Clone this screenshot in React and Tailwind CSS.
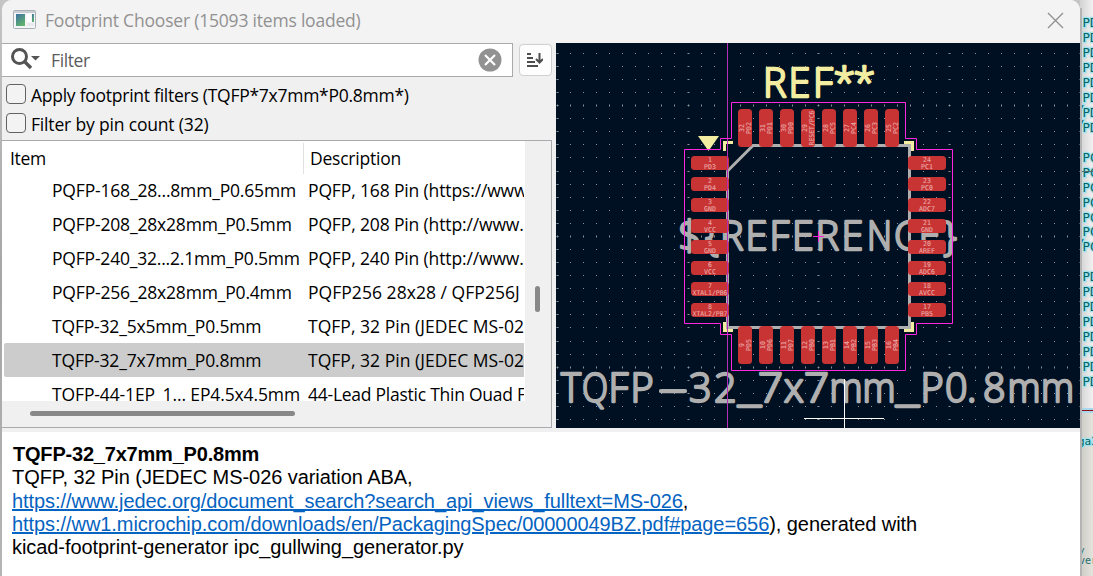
import React from "react";

const rows = [
  ["PQFP-168_28...8mm_P0.65mm", "PQFP, 168 Pin (https://www.", "tracking-[-0.14px]"],
  ["PQFP-208_28x28mm_P0.5mm", "PQFP, 208 Pin (http://www.", "tracking-[-0.14px]"],
  ["PQFP-240_32...2.1mm_P0.5mm", "PQFP, 240 Pin (http://www.", "tracking-[-0.14px]"],
  ["PQFP-256_28x28mm_P0.4mm", "PQFP256 28x28 / QFP256J", "tracking-[0.04px]"],
  ["TQFP-32_5x5mm_P0.5mm", "TQFP, 32 Pin (JEDEC MS-02", "tracking-[0.03px]"],
  ["TQFP-32_7x7mm_P0.8mm", "TQFP, 32 Pin (JEDEC MS-02", "tracking-[0.03px]"],
  ["TQFP-44-1EP_1... EP4.5x4.5mm", "44-Lead Plastic Thin Quad F", "tracking-[-0.25px]"],
];

const left = ["PD3", "PD4", "GND", "VCC", "GND", "VCC", "XTAL1/PB6", "XTAL2/PB7"];
const bottom = ["PD5", "PD6", "PD7", "PB0", "PB1", "PB2", "PB3", "PB4"];
const right = ["PC1", "PC0", "ADC7", "GND", "AREF", "ADC6", "AVCC", "PB5"];
const topPads = ["PD2", "PD1", "PD0", "RESET/PC6", "PC5", "PC4", "PC3", "PC2"];

const cols = Array.from({ length: 41 }, (_, i) => i);
const lines = Array.from({ length: 29 }, (_, i) => i);

function Grid() {
  return (
    <g fill="#8b929a" shapeRendering="crispEdges">
      {lines.map((r) =>
        cols.map((c) => {
          const x = Math.floor(557.3 + 13.075 * c);
          const y = Math.floor(53.3 + 13.08 * r);
          const wide = c % 10 === 0;
          const tall = r % 10 === 4;
          return (
            <g key={r + "-" + c}>
              <rect x={x} y={y} width="1" height="1" />
              {wide && <rect x={x - 1} y={y} width="3" height="1" opacity="0.5" />}
              {tall && <rect x={x} y={y - 1} width="1" height="3" opacity="0.5" />}
            </g>
          );
        })
      )}
    </g>
  );
}

function Pad({ cx, cy, vertical, num, name }) {
  return (
    <g transform={`translate(${cx} ${cy})${vertical ? " rotate(-90)" : ""}`}>
      <rect x="-19" y="-7" width="38" height="14" rx="3.5" fill="#c83434" />
      <g
        fill="#e8a6a6"
        stroke="#e8a6a6"
        strokeWidth="0.12"
        fontFamily="'DejaVu Sans Mono', monospace"
        fontSize="6.6"
        textAnchor="middle"
      >
        <text y="-0.8">{num}</text>
        <text y="6.4" textLength={name.length > 5 ? 35 : undefined} lengthAdjust="spacingAndGlyphs">
          {name}
        </text>
      </g>
    </g>
  );
}

/* Each run is [characters, x positions, optional fitted advance]. */
function BoardText({ runs, y, color }) {
  return (
    <text
      y={y}
      fill={color}
      stroke={color}
      strokeWidth="2.3"
      strokeLinejoin="round"
      fontFamily="'Open Sans', sans-serif"
      fontWeight="300"
      fontSize="39.5"
    >
      {runs.map(([chars, xs, fit], i) => (
        <tspan key={i} x={xs.join(" ")} textLength={fit} lengthAdjust={fit ? "spacingAndGlyphs" : undefined}>
          {chars}
        </tspan>
      ))}
    </text>
  );
}

function Preview() {
  return (
    <svg className="block h-[385px] w-[524px] shrink-0 bg-[#001023]" viewBox="556 43 524 385">
      <Grid />
      <BoardText
        runs={[
          ["${REFERE", [678.5, 705, 720, 745.5, 769.5, 792, 815.5, 841.5]],
          ["N", [867], 25],
          ["CE}", [894, 918.5, 943]],
        ]}
        y={249.5}
        color="#afafaf"
      />
      <BoardText
        runs={[
          ["T", [561], 20],
          ["Q", [582], 26],
          ["FP", [608.5, 630.5]],
          ["-", [658], 30],
          ["32", [689, 714]],
          ["_", [738], 23],
          ["7", [758], 25],
          ["x", [784]],
          ["7", [804], 25],
          ["m", [829.5], 33],
          ["m", [862.5], 33],
          ["_", [896], 23],
          ["P0.8", [920.5, 945, 967, 983]],
          ["m", [1007.5], 33],
          ["m", [1041], 33],
        ]}
        y={402}
        color="#afafaf"
      />
      <BoardText runs={[["RE", [763, 788.5]], ["F", [813]], ["**", [833.5, 853.5]]]} y={97} color="#f2eda1" />
      <g fill="none" stroke="#f2eda1" strokeWidth="3">
        <path d="M724.5 151V142.5H733M904 142.5H912.5V151M724.5 322V330.5H733M904 330.5H912.5V322" />
      </g>
      <path d="M698 136H719L708.5 151Z" fill="#f2eda1" />
      <path d="M753 145.5H909.5V327.5H727.5V171Z" fill="none" stroke="#afafaf" strokeWidth="3" />
      {left.map((n, i) => (
        <Pad key={"l" + i} cx={710} cy={163 + 21 * i} num={i + 1} name={n} />
      ))}
      {right.map((n, i) => (
        <Pad key={"r" + i} cx={927} cy={163 + 21 * i} num={24 - i} name={n} />
      ))}
      {topPads.map((n, i) => (
        <Pad key={"t" + i} cx={745 + 21 * i} cy={128} vertical num={32 - i} name={n} />
      ))}
      {bottom.map((n, i) => (
        <Pad key={"b" + i} cx={745 + 21 * i} cy={345} vertical num={9 + i} name={n} />
      ))}
      <path d="M727.5 43V428" stroke="#b32fb8" strokeWidth="1" />
      <path
        d="M731.5 102.5H905.5V138.5H916.5V149.5H952.5V323.5H916.5V334.5H905.5V370.5H731.5V334.5H720.5V323.5H684.5V149.5H720.5V138.5H731.5Z"
        fill="none"
        stroke="#ff26e2"
      />
      <path d="M813 236.5H824M818.5 231V242" stroke="#ff26e2" />
      <path d="M804 418.5H884M844.5 379V428" stroke="#fff" />
    </svg>
  );
}

const netLabels = [22, 37, 52, 67, 82, 97, 112, 127, 157, 172, 187, 202, 217, 231, 246, 276, 291, 306, 321, 336, 351, 366, 381];

function Backdrop() {
  return (
    <svg className="block h-[576px] w-[13px] shrink-0" viewBox="1080 0 13 576">
      <defs>
        <linearGradient id="edge">
          <stop offset="0" stopColor="#d2d2d2" />
          <stop offset="1" stopColor="#f2f2f2" />
        </linearGradient>
        <linearGradient id="sheet">
          <stop offset="0" stopColor="#cbcbc6" />
          <stop offset="1" stopColor="#e4e3dc" />
        </linearGradient>
      </defs>
      <rect x="1080" y="0" width="13" height="576" fill="url(#edge)" />
      <rect x="1080" y="411" width="13" height="165" fill="url(#sheet)" />
      <rect x="1080" y="408" width="13" height="5" fill="#a9d8ec" />
      <path d="M1080 410.5H1093" stroke="#8d1016" />
      <g fill="#006464" stroke="#a5e2ee" strokeWidth="2.6" paintOrder="stroke" fontFamily="'DejaVu Sans Mono', monospace" fontSize="12.5">
        {netLabels.map((y, i) => (
          <text key={y} x="1082.6" y={y + 5}>
            {i >= 8 && i <= 14 ? "PC" : "PD"}
          </text>
        ))}
        {[112, 127, 246].map((y) => (
          <text key={y} x="1077" y={y + 2}>/</text>
        ))}
        <text x="1078" y="445" fontSize="11">ga3</text>
      </g>
      <g fill="#1c6d6d" fontFamily="'DejaVu Sans Mono', monospace" fontSize="10">
        <text x="1079" y="556">/</text>
        <text x="1079" y="564">ver</text>
      </g>
      <path d="M1080 171.5H1093" stroke="#506e6e" />
      <rect x="1080" y="8" width="2" height="568" fill="#b4b4b4" />
    </svg>
  );
}

function Check({ label, fit }) {
  return (
    <label className="flex h-[29px] items-center gap-[5px] pl-1">
      <span className="-mt-0.5 size-5 shrink-0 rounded-[4px] border border-[#626262] bg-[#f3f3f3]" />
      <span className={"whitespace-pre text-[17.5px] leading-6 " + fit}>{label}</span>
    </label>
  );
}

export default function App() {
  return (
    <div className="flex h-[576px] w-[1093px] overflow-hidden bg-[#c5c5c5] font-['Open_Sans',sans-serif] text-black">
      <div className="w-0.5 shrink-0 bg-linear-to-b from-[#c4c4c4] via-[#a5a5a5] to-[#b5b5b5]" />
      <div className="flex w-[1078px] shrink-0 flex-col overflow-hidden rounded-t-[10px] bg-[#f0f0f0]">
        <header className="flex h-[43px] shrink-0 items-center bg-[#f3f3f3] pl-[11px] pr-4 text-[#919191]">
          <svg className="mt-[-4px] h-[19px] w-[23px]" viewBox="0 0 23 19">
            <defs>
              <linearGradient id="app" x2="0.6" y2="1">
                <stop stopColor="#3f6fa5" />
                <stop offset="1" stopColor="#5eb36b" />
              </linearGradient>
            </defs>
            <rect x="0.5" y="0.5" width="22" height="18" rx="1" fill="#f4f5f7" stroke="#a9afb6" />
            <rect x="1" y="1" width="21" height="2" fill="#c9ced4" />
            <rect x="3" y="4" width="9" height="12" fill="url(#app)" />
            <rect x="14" y="4" width="4" height="8" fill="#fff" />
            <rect x="19" y="4" width="2" height="8" fill="url(#app)" />
            <rect x="14" y="13" width="7" height="3" fill="#e8eaed" />
          </svg>
          <h1 className="-mt-0.5 ml-[9px] whitespace-pre text-[17.5px] font-normal tracking-[-0.2px]">
            Footprint Chooser (15093 items loaded)
          </h1>
          <svg className="-mt-0.5 ml-auto size-[17px]" viewBox="0 0 17 17" fill="none" stroke="#8f8f8f" strokeWidth="1.3">
            <path d="M1 1L16 16M16 1L1 16" />
          </svg>
        </header>

        <div className="flex h-[385px] shrink-0">
          <div className="flex w-[554px] shrink-0 flex-col pr-1">
            <div className="flex h-[34px] items-start">
              <div className="flex h-[34px] w-[511px] items-center border border-l-0 border-[#a9a9ad] bg-white pl-2">
                <svg className="-mt-0.5 h-[22px] w-[31px]" viewBox="0 0 31 22" fill="none" stroke="#545454">
                  <circle cx="9.5" cy="8.5" r="7" strokeWidth="3" />
                  <path d="M14.5 13.5L21 20" strokeWidth="3.4" />
                  <path d="M21 8H30L25.500 12.500Z" fill="#545454" stroke="none" />
                </svg>
                <span className="ml-[10px] mt-px text-[17.5px] tracking-[-0.4px] text-[#5c5c5c]">Filter</span>
                <svg className="-mt-px ml-auto mr-[10px] size-6" viewBox="0 0 24 24">
                  <circle cx="12" cy="12" r="11.500" fill="#929292" />
                  <path d="M7 7L17 17M17 7L7 17" stroke="#fff" strokeWidth="2.200" />
                </svg>
              </div>
              <div className="ml-1.5 mt-px flex h-8 w-[33px] items-center justify-center rounded-[4px] border border-[#d0d0d0] bg-[#fdfdfd] pr-0.5">
                <svg className="size-4" viewBox="0 0 16 16" fill="none" stroke="#4d4d4d" strokeWidth="2">
                  <path d="M0 2H4M0 6H6M0 10H8M0 14H11" />
                  <path d="M12.500 1V10M9 7L12.500 10.500L16 7" />
                </svg>
              </div>
            </div>

            <div className="h-[63px] pt-[3px]">
              <Check label="Apply footprint filters (TQFP*7x7mm*P0.8mm*)" fit="tracking-[-0.26px]" />
              <Check label="Filter by pin count (32)" fit="tracking-[-0.17px]" />
            </div>

            <div className="flex h-[288px] border border-l-0 border-[#a9a9ad] bg-[#f0f0f0]">
              <div className="flex w-[522px] shrink-0 flex-col overflow-hidden">
                <div className="flex h-[33px] shrink-0 items-center bg-white text-[17.5px]">
                  <span className="w-[301px] pl-2 pt-px tracking-[-0.3px]">Item</span>
                  <span className="mt-px h-[31px] w-px bg-[#e0e0e0]" />
                  <span className="pl-[6px] pt-px tracking-[-0.22px]">Description</span>
                </div>
                <div className="flex h-[227px] shrink-0 flex-col overflow-hidden bg-white">
                  {rows.map(([a, b, fit], i) => (
                    <div
                      key={i}
                      className={
                        "ml-0.5 flex shrink-0 items-center overflow-hidden whitespace-pre text-[17.5px] " +
                        (i === 0 ? "h-[33px] " : "h-[34px] ") +
                        (i === 5 ? "rounded-l-[2px] bg-[#cccccc]" : "")
                      }
                    >
                      <span className={"w-[304px] shrink-0 pl-12 " + (i === 2 ? "tracking-[-0.2px]" : i === 6 ? "tracking-[-0.12px]" : "tracking-[-0.18px]")}>
                        {a}
                      </span>
                      <span className={"w-[216px] shrink-0 overflow-hidden " + fit}>{b}</span>
                    </div>
                  ))}
                </div>
                <div className="flex h-[26px] items-center pl-7">
                  <span className="-mt-px h-[5px] w-[265px] rounded-full bg-[#888888]" />
                </div>
              </div>
              <div className="w-px shrink-0 pb-[26px]">
                <div className="h-full bg-white" />
              </div>
              <div className="flex w-[25px] justify-center pt-[145px]">
                <span className="h-[26px] w-[5px] rounded-full bg-[#888888]" />
              </div>
            </div>
          </div>
          <Preview />
        </div>

        <div className="mt-1 h-[144px] shrink-0 whitespace-pre bg-white pl-[10px] pt-[11px] font-['Liberation_Sans',sans-serif] text-[20px] leading-[23.3px] tracking-[-0.065px]">
          <p className="pl-px font-bold tracking-[-0.2px]">TQFP-32_7x7mm_P0.8mm</p>
          <p>TQFP, 32 Pin (JEDEC MS-026 variation ABA,</p>
          <p>
            <a className="text-[#0563c1] underline">https://www.jedec.org/document_search?search_api_views_fulltext=MS-026</a>,
          </p>
          <p>
            <a className="text-[#0563c1] underline">https://ww1.microchip.com/downloads/en/PackagingSpec/00000049BZ.pdf#page=656</a>), generated with
          </p>
          <p>kicad-footprint-generator ipc_gullwing_generator.py</p>
        </div>
      </div>
      <Backdrop />
    </div>
  );
}
